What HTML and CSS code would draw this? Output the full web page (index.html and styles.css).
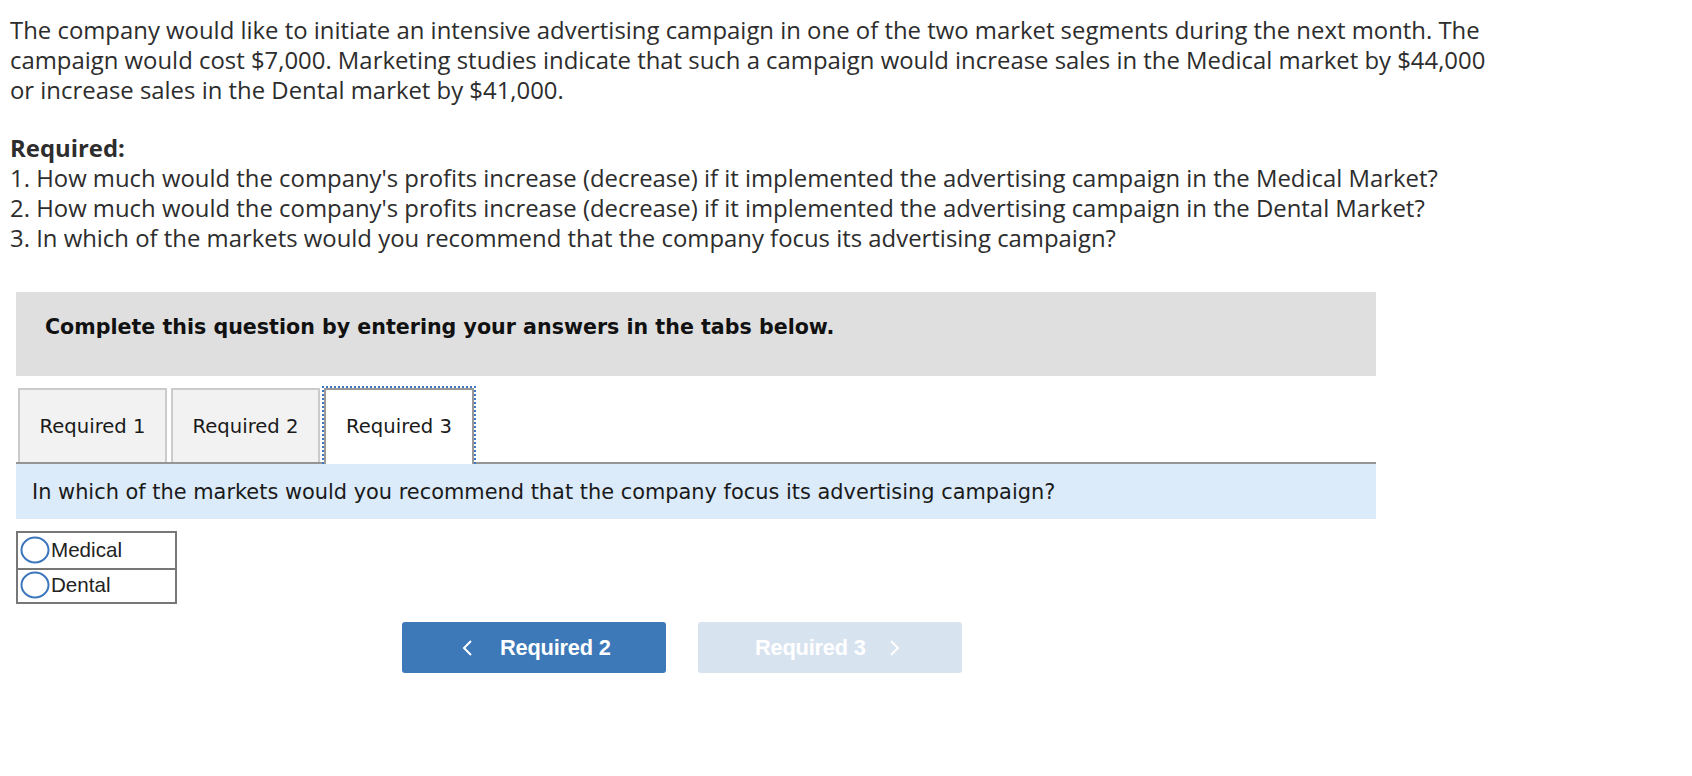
FILE: index.html
```html
<!DOCTYPE html>
<html lang="en">
<head>
<meta charset="utf-8">
<title>Advertising campaign question</title>
<link rel="stylesheet" href="styles.css">
</head>
<body>
<div class="page">
  <div class="prompt">
    <p class="intro">The company would like to initiate an intensive advertising campaign in one of the two market segments during the next month. The<br>campaign would cost $7,000. Marketing studies indicate that such a campaign would increase sales in the Medical market by $44,000<br>or increase sales in the Dental market by $41,000.</p>
    <p class="req-title">Required:</p>
    <p class="req-list">1. How much would the company's profits increase (decrease) if it implemented the advertising campaign in the Medical Market?<br>2. How much would the company's profits increase (decrease) if it implemented the advertising campaign in the Dental Market?<br>3. In which of the markets would you recommend that the company focus its advertising campaign?</p>
  </div>

  <div class="widget">
    <div class="banner">Complete this question by entering your answers in the tabs below.</div>

    <div class="tabs">
      <div class="tab">Required 1</div>
      <div class="tab">Required 2</div>
      <div class="tab active">Required 3</div>
    </div>

    <div class="question">In which of the markets would you recommend that the company focus its advertising campaign?</div>

    <div class="choices">
      <div class="choice">
        <svg class="radio" width="30" height="28" viewBox="0 0 30 28"><ellipse cx="15" cy="14" rx="13.5" ry="12.5" fill="#fff" stroke="#3b76bd" stroke-width="2"/></svg>
        <span>Medical</span>
      </div>
      <div class="choice">
        <svg class="radio" width="30" height="28" viewBox="0 0 30 28"><ellipse cx="15" cy="14" rx="13.5" ry="12.5" fill="#fff" stroke="#3b76bd" stroke-width="2"/></svg>
        <span>Dental</span>
      </div>
    </div>

    <div class="nav">
      <div class="btn prev">
        <svg class="chev" width="11" height="18" viewBox="0 0 11 18"><polyline points="9,2 2,9 9,16" fill="none" stroke="#fff" stroke-width="2"/></svg>
        <span>Required 2</span>
      </div>
      <div class="btn next">
        <span>Required 3</span>
        <svg class="chev" width="11" height="18" viewBox="0 0 11 18"><polyline points="2,2 9,9 2,16" fill="none" stroke="#fff" stroke-width="2"/></svg>
      </div>
    </div>
  </div>
</div>
</body>
</html>
```

FILE: styles.css
```css
html, body {
  margin: 0;
  padding: 0;
  background: #ffffff;
}

.page {
  padding-top: 15px;
}

.prompt {
  padding-left: 10px;
  font-family: "Open Sans", Lato, sans-serif;
  font-size: 23.9px;
  line-height: 30px;
  color: #2d2d2d;
}

.prompt p {
  margin: 0;
}

.intro {
  margin-bottom: 28px !important;
}

.req-title {
  font-weight: bold;
}

.widget {
  margin-left: 16px;
  width: 1360px;
  margin-top: 39px;
}

.banner {
  background: #dfdfdf;
  height: 84px;
  box-sizing: border-box;
  padding: 23px 0 0 29px;
  font-family: "DejaVu Sans", Verdana, sans-serif;
  font-weight: bold;
  font-size: 20.6px;
  line-height: 24px;
  color: #111;
}

.tabs {
  display: flex;
  align-items: flex-end;
  margin-top: 12px;
  padding-left: 2px;
  border-bottom: 2px solid #959595;
  height: 74px;
}

.tab {
  position: relative;
  box-sizing: border-box;
  width: 149px;
  height: 74px;
  margin-right: 4px;
  display: flex;
  align-items: center;
  justify-content: center;
  background: #f2f2f2;
  border: 2px solid #cbcbcb;
  border-bottom: none;
  font-family: "DejaVu Sans", Verdana, sans-serif;
  font-size: 19.6px;
  color: #1a1a1a;
}

.tab.active {
  width: 150px;
  height: 76px;
  margin-bottom: -2px;
  padding-bottom: 2px;
  background: #ffffff;
  border-color: #999999;
}

.tab.active::before {
  content: "";
  position: absolute;
  left: -4px;
  right: -4px;
  top: -4px;
  bottom: 0;
  border: 2px dotted #3d78bf;
  border-bottom: none;
}

.question {
  background: #dbebf9;
  height: 55px;
  box-sizing: border-box;
  padding: 16px 0 0 16px;
  font-family: "DejaVu Sans", Verdana, sans-serif;
  font-size: 20.9px;
  line-height: 24px;
  color: #1a1a1a;
}

.choices {
  margin-top: 12px;
  width: 161px;
  box-sizing: border-box;
  border: 2px solid #777777;
}

.choice {
  display: flex;
  align-items: center;
  height: 35px;
  padding-left: 2px;
  padding-bottom: 2px;
  box-sizing: border-box;
  font-family: "Liberation Sans", Arial, sans-serif;
  font-size: 20.6px;
  color: #222;
}

.choice + .choice {
  border-top: 2px solid #777777;
  height: 34px;
}

.radio {
  flex: none;
  margin-right: 1px;
}

.nav {
  display: flex;
  gap: 32px;
  margin-top: 18px;
  padding-left: 386px;
}

.btn {
  width: 264px;
  height: 51px;
  box-sizing: border-box;
  border-radius: 3px;
  display: flex;
  align-items: center;
  font-family: "Liberation Sans", Arial, sans-serif;
  font-weight: bold;
  font-size: 21.8px;
  letter-spacing: -0.2px;
  color: #ffffff;
}

.btn.prev {
  background: #3d78b8;
  padding-left: 60px;
  gap: 27px;
}

.btn.next {
  background: #d8e3f0;
  padding-left: 57px;
  gap: 23px;
}

.chev {
  flex: none;
}
```
